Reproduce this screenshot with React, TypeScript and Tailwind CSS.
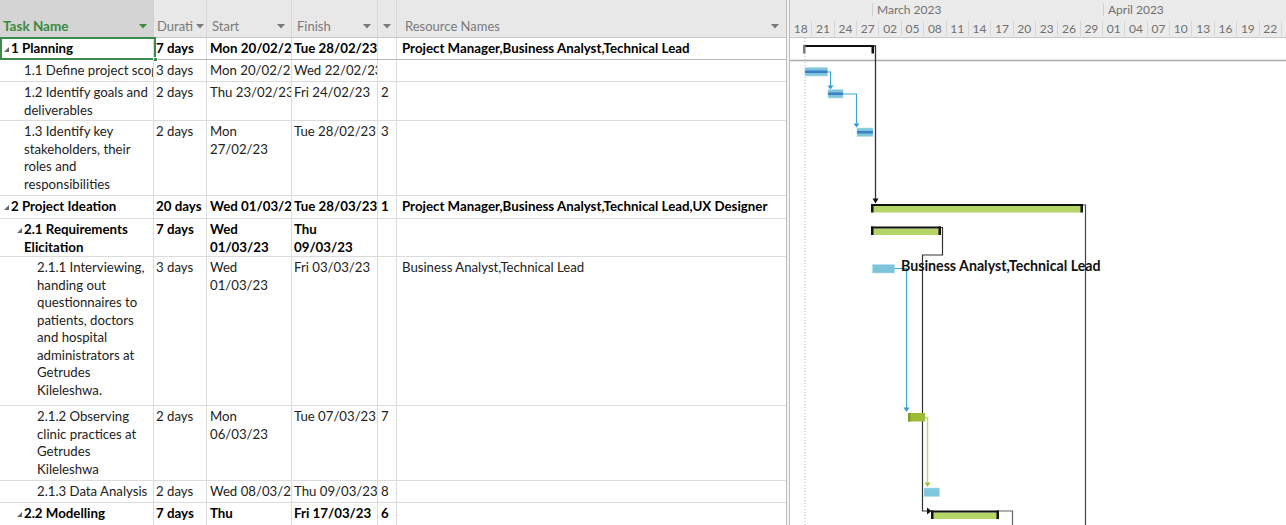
import React from 'react';

type Row = {
  h: number;
  lvl: number;
  summary?: boolean;
  name: string[];
  dur: string;
  start: string[];
  finish: string[];
  pred: string;
  res: string;
};

const rows: Row[] = [
  { h: 22, lvl: 1, summary: true, name: ['1 Planning'], dur: '7 days', start: ['Mon 20/02/23'], finish: ['Tue 28/02/23'], pred: '', res: 'Project Manager,Business Analyst,Technical Lead' },
  { h: 22, lvl: 2, name: ['1.1 Define project scope'], dur: '3 days', start: ['Mon 20/02/23'], finish: ['Wed 22/02/23'], pred: '', res: '' },
  { h: 39, lvl: 2, name: ['1.2 Identify goals and', 'deliverables'], dur: '2 days', start: ['Thu 23/02/23'], finish: ['Fri 24/02/23'], pred: '2', res: '' },
  { h: 75, lvl: 2, name: ['1.3 Identify key', 'stakeholders, their', 'roles and', 'responsibilities'], dur: '2 days', start: ['Mon', '27/02/23'], finish: ['Tue 28/02/23'], pred: '3', res: '' },
  { h: 23, lvl: 1, summary: true, name: ['2 Project Ideation'], dur: '20 days', start: ['Wed 01/03/23'], finish: ['Tue 28/03/23'], pred: '1', res: 'Project Manager,Business Analyst,Technical Lead,UX Designer' },
  { h: 38, lvl: 2, summary: true, name: ['2.1 Requirements', 'Elicitation'], dur: '7 days', start: ['Wed', '01/03/23'], finish: ['Thu', '09/03/23'], pred: '', res: '' },
  { h: 149, lvl: 3, name: ['2.1.1 Interviewing,', 'handing out', 'questionnaires to', 'patients, doctors', 'and hospital', 'administrators at', 'Getrudes', 'Kileleshwa.'], dur: '3 days', start: ['Wed', '01/03/23'], finish: ['Fri 03/03/23'], pred: '', res: 'Business Analyst,Technical Lead' },
  { h: 75, lvl: 3, name: ['2.1.2 Observing', 'clinic practices at', 'Getrudes', 'Kileleshwa'], dur: '2 days', start: ['Mon', '06/03/23'], finish: ['Tue 07/03/23'], pred: '7', res: '' },
  { h: 22, lvl: 3, name: ['2.1.3 Data Analysis'], dur: '2 days', start: ['Wed 08/03/23'], finish: ['Thu 09/03/23'], pred: '8', res: '' },
  { h: 60, lvl: 2, summary: true, name: ['2.2 Modelling'], dur: '7 days', start: ['Thu', '16/03/23'], finish: ['Fri 17/03/23'], pred: '6', res: '' },
];

const dates = ['18', '21', '24', '27', '02', '05', '08', '11', '14', '17', '20', '23', '26', '29', '01', '04', '07', '10', '13', '16', '19', '22'];

const Caret = ({ green }: { green?: boolean }) => (
  <svg width="8" height="5" viewBox="0 0 8 5" className="shrink-0">
    <polygon points="0,0 8,0 4,4.5" fill={green ? '#3d8b40' : '#7a7a7a'} />
  </svg>
);

const Lines = ({ lines }: { lines: string[] }) => (
  <>
    {lines.map((l, i) => (
      <div key={i} className="whitespace-nowrap">{l}</div>
    ))}
  </>
);

const Header = () => (
  <div className="flex h-[38px] shrink-0 border-b border-[#c9c9c9] bg-[#e8e8e8] text-[13px] leading-[17.5px] text-[#7b7b7b]">
    <div className="flex w-[154px] shrink-0 items-end justify-between border-r border-[#d0d0d0] bg-[#d4d4d4] pb-[2px] pl-[3px] pr-[6px]">
      <span className="text-[13.5px] font-bold text-[#3b8a3e]">Task Name</span>
      <span className="mb-[6px]"><Caret green /></span>
    </div>
    <div className="flex w-[53px] shrink-0 items-end gap-[3px] border-r border-[#d6d6d6] pb-[2px] pl-[3px]">
      <span className="overflow-hidden whitespace-nowrap">Durati</span>
      <span className="mb-[6px]"><Caret /></span>
    </div>
    <div className="flex w-[85px] shrink-0 items-end justify-between border-r border-[#d6d6d6] pb-[2px] pl-[5px] pr-[6px]">
      <span>Start</span>
      <span className="mb-[6px]"><Caret /></span>
    </div>
    <div className="flex w-[86px] shrink-0 items-end justify-between border-r border-[#d6d6d6] pb-[2px] pl-[5px] pr-[6px]">
      <span>Finish</span>
      <span className="mb-[6px]"><Caret /></span>
    </div>
    <div className="flex w-[19px] shrink-0 items-end justify-center border-r border-[#d6d6d6] pb-[8px]">
      <Caret />
    </div>
    <div className="flex flex-1 items-end justify-between pb-[2px] pl-[8px] pr-[7px]">
      <span>Resource Names</span>
      <span className="mb-[6px]"><Caret /></span>
    </div>
  </div>
);

const TableRow = ({ r, first }: { r: Row; first: boolean }) => {
  const pl = 11 + (r.lvl - 1) * 13;
  const weight = r.summary ? 'font-bold text-black text-[13.3px]' : 'text-[#222] text-[13.2px]';
  return (
    <div
      className={`relative flex shrink-0 border-b ${first ? 'border-[#b8b8b8]' : 'border-[#dcdcdc]'} leading-[17.5px] ${weight}`}
      style={{ height: r.h }}
    >
      <div className="relative w-[154px] shrink-0 overflow-hidden border-r border-[#dcdcdc] pt-[2px]" style={{ paddingLeft: pl }}>
        {r.summary && (
          <svg width="5" height="5" viewBox="0 0 5 5" className="absolute top-[9px]" style={{ left: pl - 7 }}>
            <polygon points="5,0 5,5 0,5" fill="#666" />
          </svg>
        )}
        <Lines lines={r.name} />
      </div>
      <div className="w-[53px] shrink-0 overflow-hidden border-r border-[#dcdcdc] pl-[2px] pt-[2px]">
        <div className="whitespace-nowrap">{r.dur}</div>
      </div>
      <div className="w-[85px] shrink-0 overflow-hidden border-r border-[#dcdcdc] pl-[3px] pt-[2px]">
        <Lines lines={r.start} />
      </div>
      <div className="w-[86px] shrink-0 overflow-hidden border-r border-[#dcdcdc] pl-[2px] pt-[2px]">
        <Lines lines={r.finish} />
      </div>
      <div className="w-[19px] shrink-0 overflow-hidden border-r border-[#dcdcdc] pl-[3px] pt-[2px]">{r.pred}</div>
      <div className="flex-1 overflow-hidden whitespace-nowrap pl-[5px] pt-[2px]">{r.res}</div>
      {first && (
        <div className="absolute left-0 top-[-1px] h-[23px] w-[156px] border-2 border-[#3c8a4c]">
          <div className="absolute bottom-[-4px] right-[-4px] h-[5px] w-[5px] border border-white bg-[#3c8a4c]" />
        </div>
      )}
    </div>
  );
};

const Summary = ({ x1, x2, y, fill = true }: { x1: number; x2: number; y: number; fill?: boolean }) => (
  <g>
    {fill && <rect x={x1 + 2} y={y + 2} width={x2 - x1 - 4} height={6.5} fill="#b4d566" />}
    <rect x={x1} y={y} width={x2 - x1} height={2} fill="#111" />
    <rect x={x1} y={y} width={2.5} height={8.5} fill={fill ? '#111' : '#7a7a7a'} />
    <rect x={x2 - 2.5} y={y} width={2.5} height={8.5} fill="#111" />
  </g>
);

const TaskBar = ({ x, y, w, stripe, color = '#7fc6db' }: { x: number; y: number; w: number; stripe?: boolean; color?: string }) => (
  <g>
    <rect x={x} y={y} width={w} height={8.5} fill={color} stroke="#b3dfeb" strokeWidth={0.6} />
    {stripe && <rect x={x} y={y + 3} width={w} height={2.5} fill="#3a7fc7" />}
  </g>
);

const Gantt = () => (
  <div className="flex w-[496px] shrink-0 flex-col">
    <div className="flex h-[38px] shrink-0 flex-col border-b border-[#c9c9c9] bg-[#ebebeb] text-[12px] leading-[19px] text-[#707070]">
      <div className="flex h-[19px]">
        <div className="w-[82px] shrink-0" />
        <div className="my-[3px] w-[231px] shrink-0 border-l border-[#d2d2d2] pl-[4px] leading-[13px]">March 2023</div>
        <div className="my-[3px] flex-1 border-l border-[#d2d2d2] pl-[4px] leading-[13px]">April 2023</div>
      </div>
      <div className="flex h-[19px]">
        {dates.map((d, i) => (
          <div key={i} className="my-[2px] w-[22.36px] shrink-0 border-r border-[#d6d6d6] text-center leading-[15px]">
            {d}
          </div>
        ))}
      </div>
    </div>
    <svg width="496" height="487" viewBox="790 38 496 487" className="block shrink-0 bg-white font-['Lato']">
      <line x1="805" y1="38" x2="805" y2="525" stroke="#b8b8b8" strokeWidth="1" strokeDasharray="1 2" />
      <line x1="790" y1="60.5" x2="1286" y2="60.5" stroke="#ababab" strokeWidth="1.5" />

      {/* planning */}
      <Summary x1={803} x2={874} y={45} fill={false} />
      <path d="M874 46 H875.5 V199" fill="none" stroke="#333" strokeWidth="1.3" />
      <polygon points="872.5,198.5 878.5,198.5 875.5,203.5" fill="#111" />

      <TaskBar x={805} y={67.5} w={22.5} stripe />
      <path d="M827.5 72 H830.5 V86" fill="none" stroke="#38a8d2" strokeWidth="1.1" />
      <polygon points="827.5,85.5 833.5,85.5 830.5,89.5" fill="#2f9fca" />

      <TaskBar x={828} y={89.5} w={15} stripe />
      <path d="M843 94 H856.5 V124" fill="none" stroke="#38a8d2" strokeWidth="1.1" />
      <polygon points="853.5,123.5 859.5,123.5 856.5,127.5" fill="#2f9fca" />

      <TaskBar x={857} y={128} w={16} stripe />

      {/* project ideation */}
      <Summary x1={871} x2={1083} y={204} />
      <path d="M1083 205 H1085.5 V525" fill="none" stroke="#444" strokeWidth="1.2" />

      <Summary x1={871} x2={941} y={226.5} />
      <path d="M941 227.5 H942.5 V255 H922.5 V511 H928" fill="none" stroke="#333" strokeWidth="1.2" />
      <polygon points="927,507.5 927,514.5 931.5,511" fill="#111" />

      <TaskBar x={872.5} y={264.5} w={22} color="#7cc4d9" />
      <path d="M894.5 268.5 H906.5 V408" fill="none" stroke="#39a9d3" strokeWidth="1.1" />
      <polygon points="903.5,407.5 909.5,407.5 906.5,412" fill="#2f9fca" />

      <rect x={908} y={413} width={17} height={8.5} fill="#9cbc38" />
      <rect x={908} y={413} width={2.5} height={8.5} fill="#7f9e22" />
      <path d="M925 417.5 H927.5 V483" fill="none" stroke="#bcd77c" strokeWidth="1.5" />
      <polygon points="924.5,482.5 930.5,482.5 927.5,487" fill="#9cc23a" />

      <TaskBar x={924} y={488} w={15.5} color="#7ec8dd" />

      <Summary x1={931} x2={999} y={510.5} />
      <path d="M999 511 H1012.5 V525" fill="none" stroke="#666" strokeWidth="1.2" />

      <text x="901" y="270.5" fontSize="14.2" fontWeight="bold" fill="#111">
        Business Analyst,Technical Lead
      </text>
    </svg>
  </div>
);

export default function App() {
  return (
    <div className="flex h-[525px] w-[1286px] overflow-hidden bg-white font-['Lato',sans-serif]">
      <div className="flex w-[786px] shrink-0 flex-col">
        <Header />
        {rows.map((r, i) => (
          <TableRow key={i} r={r} first={i === 0} />
        ))}
      </div>
      <div className="h-full w-[4px] shrink-0 border-x border-[#bdbdbd] bg-[#f4f4f4]" />
      <Gantt />
    </div>
  );
}
